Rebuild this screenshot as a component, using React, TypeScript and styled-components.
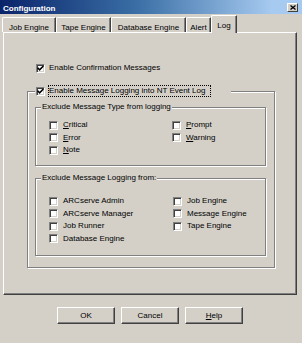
import React from "react";
import styled, { createGlobalStyle } from "styled-components";

const Global = createGlobalStyle`
  html, body { margin: 0; padding: 0; background: #d4d0c8; }
  body {
    font-family: "Liberation Sans", Arial, sans-serif;
    font-size: 8px;
    color: #000;
  }
  * { box-sizing: border-box; }
`;

const Window = styled.div`
  width: 302px;
  height: 343px;
  background: #d4d0c8;
  display: flex;
  flex-direction: column;
  overflow: hidden;
`;

const TitleBar = styled.div`
  height: 14px;
  flex: none;
  display: flex;
  align-items: center;
  padding: 0 4px 0 3px;
  background: linear-gradient(to right, #0a246a 0%, #3a6ea5 45%, #a6caf0 90%, #a6caf0 100%);
`;

const Title = styled.span`
  color: #fff;
  font-weight: bold;
  font-size: 8px;
  line-height: 9px;
  margin-top: 3px;
  white-space: nowrap;
`;

const CloseButton = styled.div`
  margin-left: auto;
  width: 11px;
  height: 9px;
  background: #d4d0c8;
  border-top: 1px solid #fff;
  border-left: 1px solid #fff;
  border-right: 1px solid #404040;
  border-bottom: 1px solid #404040;
  display: flex;
  align-items: center;
  justify-content: center;
`;

const TabRow = styled.div`
  display: flex;
  align-items: flex-end;
  height: 15px;
  margin-top: 3px;
  padding-left: 2px;
  flex: none;
`;

const Tab = styled.div<{ $w: number; $active?: boolean }>`
  position: relative;
  z-index: ${(p) => (p.$active ? 2 : 1)};
  width: ${(p) => p.$w}px;
  height: ${(p) => (p.$active ? 18 : 15)}px;
  margin-bottom: ${(p) => (p.$active ? -1 : 0)}px;
  padding-top: ${(p) => (p.$active ? 5 : 5)}px;
  background: #d4d0c8;
  border-top: 1px solid #fff;
  border-left: 1px solid #fff;
  border-right: 1px solid #404040;
  border-top-left-radius: 2px;
  border-top-right-radius: 1px;
  box-shadow: inset -1px 0 0 #808080;
  text-align: center;
  line-height: 9px;
  white-space: nowrap;
`;

const Panel = styled.div`
  flex: none;
  margin-left: 3px;
  width: 294px;
  height: 263px;
  background: #d4d0c8;
  border-top: 1px solid #fff;
  border-left: 1px solid #fff;
  border-right: 1px solid #404040;
  border-bottom: 1px solid #404040;
  box-shadow: inset -1px -1px 0 #808080;
  padding: 30px 0 0 23px;
  display: flex;
  flex-direction: column;
  align-items: flex-start;
`;

const CheckRow = styled.label<{ $gap?: number; $indent?: number }>`
  display: flex;
  align-items: center;
  gap: ${(p) => p.$gap ?? 4}px;
  height: 10px;
  line-height: 10px;
  margin-left: ${(p) => p.$indent ?? 0}px;
  white-space: nowrap;
`;

const Box = styled.span`
  flex: none;
  width: 9px;
  height: 9px;
  background: #fff;
  border-top: 1px solid #808080;
  border-left: 1px solid #808080;
  border-right: 1px solid #fff;
  border-bottom: 1px solid #fff;
  box-shadow: inset 1px 1px 0 #404040, inset -1px -1px 0 #d4d0c8;
  display: flex;
  align-items: center;
  justify-content: center;
`;

const GroupBox = styled.fieldset<{ $w: number; $mt?: number }>`
  margin: ${(p) => p.$mt ?? 0}px 0 0 0;
  padding: 0;
  min-width: 0;
  width: ${(p) => p.$w}px;
  border: 1px solid #808080;
  box-shadow: inset 1px 1px 0 #fff, 1px 1px 0 #fff;
`;

const Legend = styled.legend<{ $ml: number; $w?: number }>`
  margin-left: ${(p) => p.$ml}px;
  padding: 0 1px;
  ${(p) => (p.$w ? `width: ${p.$w}px;` : "")}
  background: #d4d0c8;
  line-height: 10px;
  height: 10px;
  white-space: nowrap;
`;

const CheckLegend = styled.legend`
  margin-left: 7px;
  padding: 0 0 0 1px;
  width: 196px;
  height: 12px;
  background: #d4d0c8;
  display: flex;
  align-items: center;
  gap: 3px;
`;

const FocusLabel = styled.span`
  width: 163px;
  height: 12px;
  border: 1px dotted #000;
  padding-left: 0;
  line-height: 10px;
  white-space: nowrap;
`;

const GroupBody = styled.div<{ $pt: number; $pb: number; $pl: number; $pr?: number }>`
  padding: ${(p) => `${p.$pt}px ${p.$pr ?? 0}px ${p.$pb}px ${p.$pl}px`};
`;

const CheckGrid = styled.div<{ $rows: number; $col: number; $pt: number; $pb: number }>`
  display: grid;
  grid-auto-flow: column;
  grid-template-rows: repeat(${(p) => p.$rows}, 10px);
  grid-template-columns: ${(p) => p.$col}px auto;
  row-gap: 2.5px;
  padding: ${(p) => p.$pt}px 0 ${(p) => p.$pb}px 13px;
`;

const Key = styled.span`
  text-decoration: underline;
`;

const ButtonRow = styled.div`
  display: flex;
  gap: 6px;
  margin-top: 12px;
  padding-left: 57px;
`;

const Button = styled.div`
  width: 58px;
  height: 17px;
  background: #d4d0c8;
  border-top: 1px solid #fff;
  border-left: 1px solid #fff;
  border-right: 1px solid #404040;
  border-bottom: 1px solid #404040;
  box-shadow: inset -1px -1px 0 #808080;
  display: flex;
  align-items: center;
  justify-content: center;
  line-height: 10px;
`;

const Check = ({ checked }: { checked?: boolean }) => (
  <Box>
    {checked && (
      <svg width="7" height="7" viewBox="0 0 7 7">
        <path d="M0.6 2.8 L2.6 4.8 L6.4 1" fill="none" stroke="#000" strokeWidth="1.6" />
      </svg>
    )}
  </Box>
);

const Item = ({ label, k }: { label: string; k?: number }) => (
  <CheckRow $gap={5}>
    <Check />
    <span>
      {k === undefined ? (
        label
      ) : (
        <>
          {label.slice(0, k)}
          <Key>{label[k]}</Key>
          {label.slice(k + 1)}
        </>
      )}
    </span>
  </CheckRow>
);

const tabs: { label: string; w: number; active?: boolean }[] = [
  { label: "Job Engine", w: 54 },
  { label: "Tape Engine", w: 55 },
  { label: "Database Engine", w: 75 },
  { label: "Alert", w: 25 },
  { label: "Log", w: 26, active: true },
];

export default function App() {
  return (
    <>
      <Global />
      <Window>
        <TitleBar>
          <Title>Configuration</Title>
          <CloseButton>
            <svg width="6" height="5" viewBox="0 0 6 5">
              <path d="M0.5 0.5 L5.5 4.5 M5.5 0.5 L0.5 4.5" stroke="#000" strokeWidth="1.3" />
            </svg>
          </CloseButton>
        </TitleBar>
        <TabRow>
          {tabs.map((t) => (
            <Tab key={t.label} $w={t.w} $active={t.active}>
              {t.label}
            </Tab>
          ))}
        </TabRow>
        <Panel>
          <CheckRow $indent={9}>
            <Check checked />
            <span>Enable Confirmation Messages</span>
          </CheckRow>
          <GroupBox $w={248} $mt={12}>
            <CheckLegend>
              <Check checked />
              <FocusLabel>Enable Message Logging into NT Event Log</FocusLabel>
            </CheckLegend>
            <GroupBody $pt={5} $pb={11} $pl={7} $pr={8}>
              <GroupBox $w={231}>
                <Legend $ml={5}>Exclude Message Type from logging</Legend>
                <CheckGrid $rows={3} $col={123} $pt={8} $pb={10}>
                  <Item label="Critical" k={0} />
                  <Item label="Error" k={0} />
                  <Item label="Note" k={0} />
                  <Item label="Prompt" k={0} />
                  <Item label="Warning" k={0} />
                </CheckGrid>
              </GroupBox>
              <GroupBox $w={231} $mt={7}>
                <Legend $ml={5}>Exclude Message Logging from:</Legend>
                <CheckGrid $rows={4} $col={124} $pt={13} $pb={11}>
                  <Item label="ARCserve Admin" />
                  <Item label="ARCserve Manager" />
                  <Item label="Job Runner" />
                  <Item label="Database Engine" />
                  <Item label="Job Engine" />
                  <Item label="Message Engine" />
                  <Item label="Tape Engine" />
                </CheckGrid>
              </GroupBox>
            </GroupBody>
          </GroupBox>
        </Panel>
        <ButtonRow>
          <Button>OK</Button>
          <Button>Cancel</Button>
          <Button>
            <span>
              <Key>H</Key>elp
            </span>
          </Button>
        </ButtonRow>
      </Window>
    </>
  );
}
